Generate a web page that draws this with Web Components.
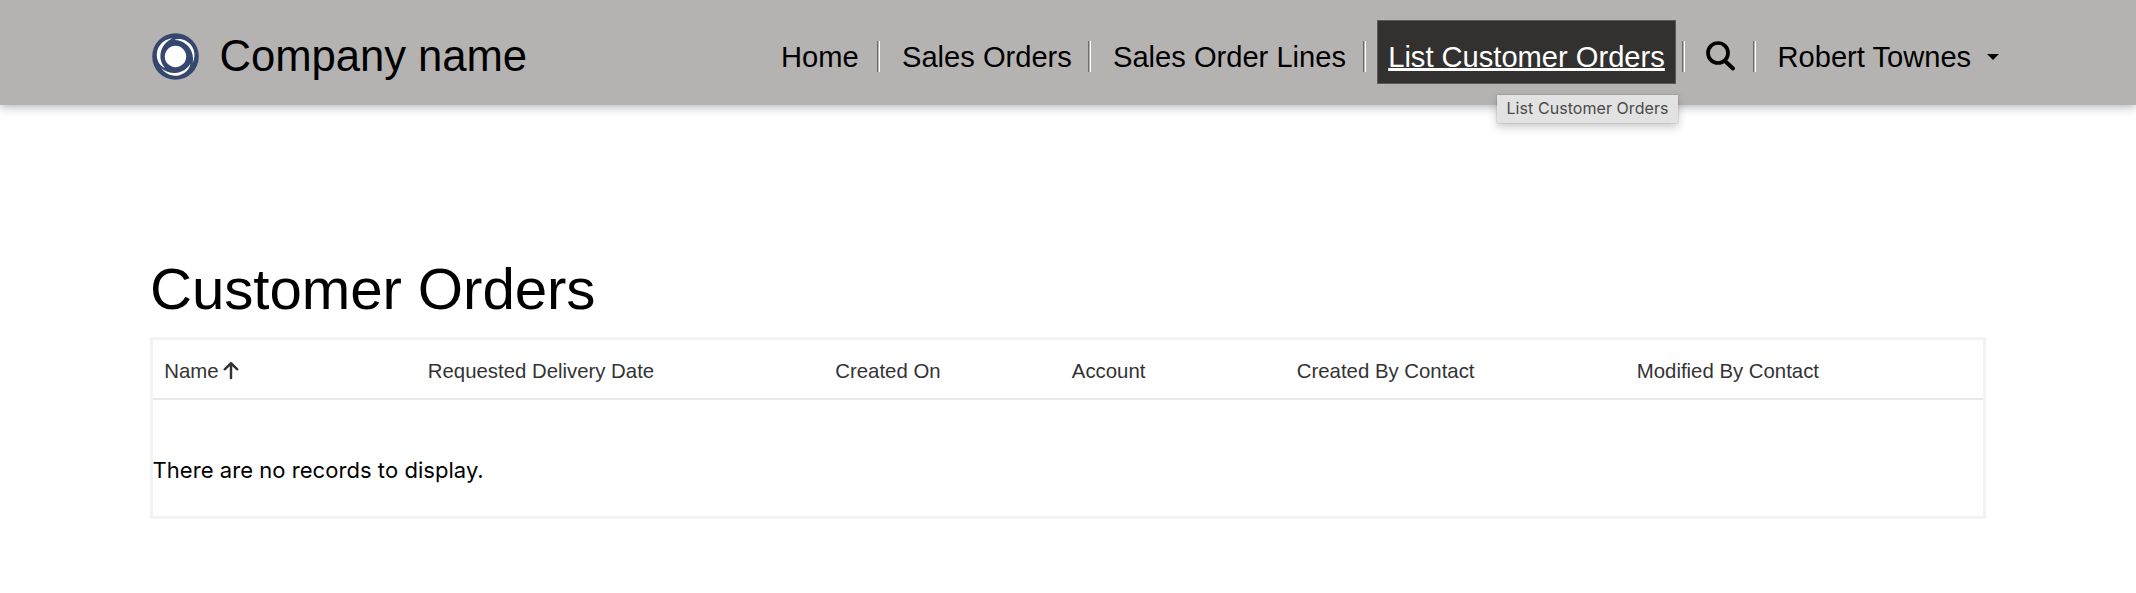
<!DOCTYPE html>
<html lang="en"><head><meta charset="utf-8"><title>Customer Orders</title>
<style>body{margin:0;background:#fff;font-family:Arial,"Liberation Sans",sans-serif;color:#000}</style></head>
<body>
<portal-page></portal-page>
<script>
const define=(name,html)=>{const t=document.createElement('template');t.innerHTML=html;
customElements.define(name,class extends HTMLElement{constructor(){super();this.attachShadow({mode:'open'}).append(t.content.cloneNode(true));}});};

define('brand-logo',`<style>:host{display:block;width:47px;height:47px}svg{display:block}</style>
<svg width="47" height="47" viewBox="0 0 47 47"><circle cx="23.5" cy="23.5" r="23.3" fill="#36476f"/><circle cx="23.5" cy="23.5" r="10.7" fill="#fff"/>
<g fill="#fff"><path d="M20.700 5.200C10 6.500 4.600 14 4.800 22.500C5 28.500 8.500 33.500 13 34.800C9.500 31 7.800 26 8.600 20.500C9.600 13.500 14.500 8 20.700 5.200Z"/>
<path d="M20.700 5.200C10 6.500 4.600 14 4.800 22.500C5 27 6.800 30.500 10 33C7.800 29.500 6.800 25.500 7.500 20.500C8.500 13.500 13.500 8 20.700 5.200Z" transform="rotate(120 23.500 23.500)"/>
<path d="M20.700 5.200C10 6.500 4.600 14 4.800 22.500C5 27 6.800 30.500 10 33C7.800 29.500 6.800 25.500 7.500 20.500C8.500 13.500 13.500 8 20.700 5.200Z" transform="rotate(240 23.500 23.500)"/></g></svg>`);

define('nav-divider',`<style>:host{display:block;flex:none;box-sizing:border-box;width:3px;height:31px;border-left:1px solid #6b6a69;border-right:1px solid #fff;background:#b5b3b1}</style>`);

define('nav-link',`<style>:host{display:block;flex:none;font-size:29.12px;line-height:34px;white-space:nowrap}</style><slot></slot>`);

define('hover-tip',`<style>:host{display:block;position:absolute;left:119px;top:74px;width:181px;height:28px;box-sizing:border-box;background:#e2e2e2;color:#4a4a4a;font:16px/26px Inter,sans-serif;letter-spacing:.06px;text-align:center;text-decoration:none;box-shadow:0 0 1px rgba(0,0,0,.4),0 4px 10px rgba(0,0,0,.22);white-space:nowrap;z-index:3}</style><slot></slot>`);

define('nav-current',`<style>:host{display:block;position:relative;flex:none;width:299px;height:64px;box-sizing:border-box;border:1px solid #5a5957;background:#32312f;color:#fff;font-size:29.12px;line-height:72px;text-align:center;white-space:nowrap}
span{text-decoration:underline;text-decoration-thickness:3px;text-underline-offset:1px;text-decoration-skip-ink:none}</style><span><slot></slot></span><slot name="tip"></slot>`);

define('site-header',`<style>:host{display:flex;box-sizing:border-box;height:105px;background:#b5b3b1;padding-left:152px;align-items:flex-start;box-shadow:0 1px 10px rgba(0,10,20,.36);position:relative}
brand-logo{margin-top:33px}
.name{flex:none;margin:31px 0 0 20.500px;width:561.500px;font-size:43.680px;letter-spacing:-.06px;line-height:50px;white-space:nowrap}
nav-divider{margin-top:41px}nav-link{margin-top:40px}nav-current{margin-top:20px}
.search{display:block;flex:none;margin:41px 0 0 18px}.caret{display:block;margin:54px 0 0 16px}</style>
<brand-logo></brand-logo><div class="name">Company name</div>
<nav-link style="width:96px">Home</nav-link><nav-divider style="margin-right:22px"></nav-divider>
<nav-link style="width:186px">Sales Orders</nav-link><nav-divider style="margin-right:22px"></nav-divider>
<nav-link style="width:250px">Sales Order Lines</nav-link><nav-divider style="margin-right:11px"></nav-divider>
<nav-current>List Customer Orders<hover-tip slot="tip">List Customer Orders</hover-tip></nav-current>
<nav-divider style="margin-left:6px"></nav-divider>
<svg class="search" width="34" height="31" viewBox="0 0 34 31" fill="none" stroke="#000"><circle cx="15" cy="12" r="10" stroke-width="3.700"/><path d="M22.500 20.500L30 27.500" stroke-width="4" stroke-linecap="round"/></svg>
<nav-divider style="margin-left:16px;margin-right:21.500px"></nav-divider>
<nav-link>Robert Townes</nav-link><svg class="caret" width="12" height="6"><path d="M0 0H12L6 6Z"/></svg>`);

define('data-grid',`<style>:host{display:block;box-sizing:border-box;width:1836px;height:182px;border:3px solid #f3f3f3}
.head{display:grid;grid-template-columns:263.500px 407.500px 236.500px 225px 340px auto;box-sizing:border-box;height:60px;border-bottom:2px solid #e8e8ed;padding-left:11.300px;font-size:20.380px;line-height:58px;padding-top:2px;color:#333;white-space:nowrap}
.head div{display:flex}svg{margin:19px 0 0 4.500px}
p{margin:57px 0 0 -.5px;font:22px/27px Inter,sans-serif;letter-spacing:.05px}</style>
<div class="head"><div>Name<svg width="16" height="19" viewBox="0 0 17 19" fill="none" stroke="#333" stroke-width="2.600" stroke-linecap="round" stroke-linejoin="round"><path d="M8.500 17.500V2M1.800 8.200L8.500 1.800L15.200 8.200"/></svg></div><div>Requested Delivery Date</div><div>Created On</div><div>Account</div><div>Created By Contact</div><div>Modified By Contact</div></div>
<p>There are no records to display.</p>`);

define('portal-page',`<style>:host{display:block;height:593px;overflow:hidden}
h1{margin:150px 0 15px 150px;font-weight:400;font-size:58.240px;letter-spacing:-.08px;line-height:67px}data-grid{margin-left:150px}</style>
<site-header></site-header><h1>Customer Orders</h1><data-grid></data-grid>`);
</script></body></html>
